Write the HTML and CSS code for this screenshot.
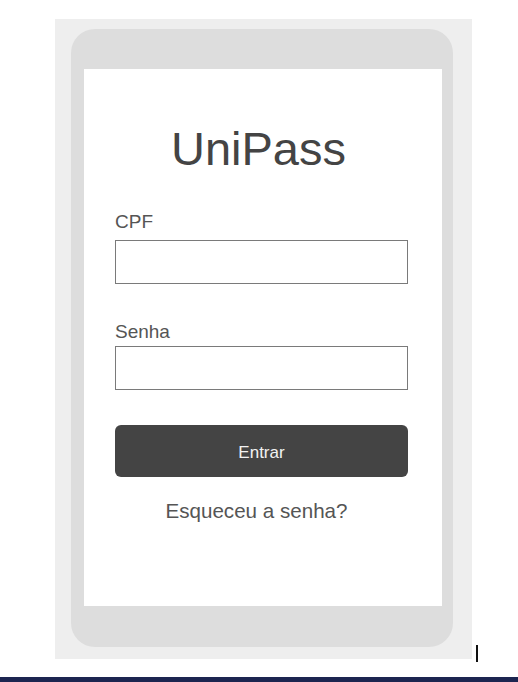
FILE: index.html
```html
<!DOCTYPE html>
<html lang="pt-BR">
<head>
<meta charset="utf-8">
<title>UniPass</title>
<link rel="stylesheet" href="styles.css">
</head>
<body>
<div class="stage">
  <div class="panel">
    <div class="phone">
      <div class="screen">
        <h1 class="title">UniPass</h1>
        <form class="form">
          <label class="field field-cpf">
            <span class="label">CPF</span>
            <input class="input" type="text">
          </label>
          <label class="field field-senha">
            <span class="label">Senha</span>
            <input class="input" type="password">
          </label>
          <button class="btn" type="button">Entrar</button>
        </form>
        <a class="forgot">Esqueceu a senha?</a>
      </div>
    </div>
  </div>
  <span class="caret"></span>
</div>
<div class="bar"></div>
</body>
</html>
```

FILE: styles.css
```css
html, body {
  margin: 0;
  padding: 0;
  background: #ffffff;
}

body {
  font-family: "Liberation Sans", Arial, sans-serif;
  width: 518px;
  height: 682px;
  overflow: hidden;
}

.stage {
  display: flex;
  align-items: flex-end;
  padding: 19px 0 0 55px;
}

.panel {
  width: 417px;
  height: 640px;
  box-sizing: border-box;
  background: #eeeeee;
  padding: 10px 19px 12px 16px;
}

.phone {
  height: 100%;
  box-sizing: border-box;
  background: #dddddd;
  border-radius: 24px;
  padding: 40px 11px 41px 13px;
}

.screen {
  height: 100%;
  box-sizing: border-box;
  background: #ffffff;
  padding: 57px 34px 0 31px;
  display: flex;
  flex-direction: column;
}

.title {
  margin: 0;
  padding-right: 6px;
  font-size: 47px;
  line-height: 46px;
  font-weight: normal;
  color: #444444;
  text-align: center;
}

.form {
  display: flex;
  flex-direction: column;
  margin-top: 40px;
}

.field {
  display: flex;
  flex-direction: column;
}

.field-senha {
  margin-top: 38px;
}

.label {
  font-size: 19px;
  line-height: 19px;
  color: #555555;
  margin-bottom: 9px;
}

.field-senha .label {
  margin-bottom: 5px;
}

.input {
  display: block;
  width: 100%;
  height: 44px;
  box-sizing: border-box;
  margin: 0;
  border: 1px solid #7a7a7a;
  border-radius: 0;
  background: #ffffff;
  outline: none;
}

.btn {
  margin-top: 35px;
  height: 52px;
  width: 100%;
  padding: 4px 0 0;
  border: none;
  border-radius: 6px;
  background: #444444;
  color: #f2f2f2;
  font-family: "Liberation Sans", Arial, sans-serif;
  font-size: 17px;
}

.forgot {
  margin-top: 24px;
  padding-right: 10px;
  font-size: 20.6px;
  line-height: 20px;
  color: #555555;
  text-align: center;
}

.caret {
  width: 2px;
  height: 17px;
  background: #111111;
  margin-left: 4px;
  margin-bottom: -3px;
}

.bar {
  margin-top: 18px;
  height: 5px;
  background: #1c2550;
}
```
